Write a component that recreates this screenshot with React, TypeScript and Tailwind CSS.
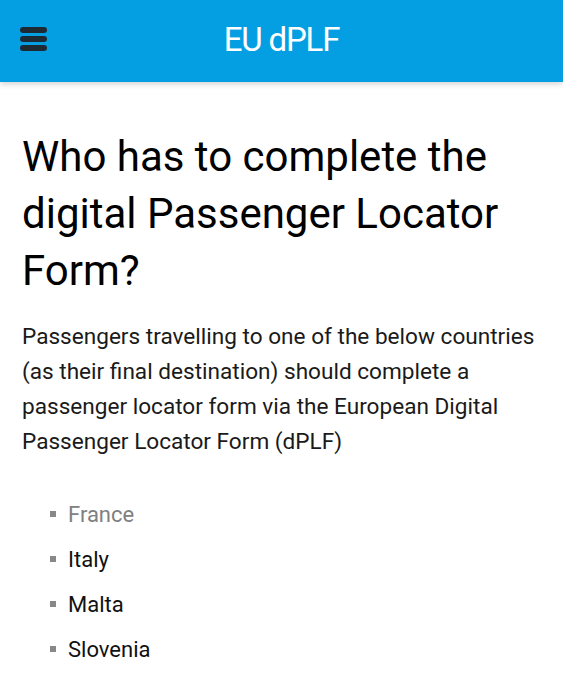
const countries = [
  { name: "France", muted: true },
  { name: "Italy", muted: false },
  { name: "Malta", muted: false },
  { name: "Slovenia", muted: false },
];

const App: React.FC = () => {
  return (
    <div className="min-h-[700px] bg-white" style={{ fontFamily: "Roboto, 'Noto Sans', sans-serif" }}>
      <header className="relative flex h-[82px] items-center justify-center bg-[#049fe3] shadow-[0_2px_6px_rgba(0,0,0,0.18)]">
        <button className="absolute left-[20px] top-[27px] flex w-[27px] flex-col gap-[3px]">
          <span className="block h-[6px] rounded-[3px] bg-[#1d2a33]"></span>
          <span className="block h-[6px] rounded-[3px] bg-[#1d2a33]"></span>
          <span className="block h-[6px] rounded-[3px] bg-[#1d2a33]"></span>
        </button>
        <h1 className="-mt-[4px] text-[33px] leading-none tracking-[-1.2px] text-white">EU dPLF</h1>
      </header>

      <main className="pl-[22px] pr-[20px] pt-[46px]">
        <h2 className="text-[42px] leading-[57px] text-black">
          Who has to complete the digital Passenger Locator Form?
        </h2>
        <p className="mt-[20px] text-[22.6px] leading-[35px] text-[#1a1a1a]">
          Passengers travelling to one of the below countries (as their final destination) should complete a
          passenger locator form via the European Digital Passenger Locator Form (dPLF)
        </p>
        <ul className="mt-[40px] flex flex-col gap-[15px] pl-[28px]">
          {countries.map((c) => (
            <li key={c.name} className="flex h-[30px] items-center gap-[12px] text-[22px]">
              <span className="block h-[6px] w-[6px] bg-[#888]"></span>
              <span className={c.muted ? "text-[#808080]" : "text-[#111]"}>{c.name}</span>
            </li>
          ))}
        </ul>
      </main>
    </div>
  );
};

export default App;
